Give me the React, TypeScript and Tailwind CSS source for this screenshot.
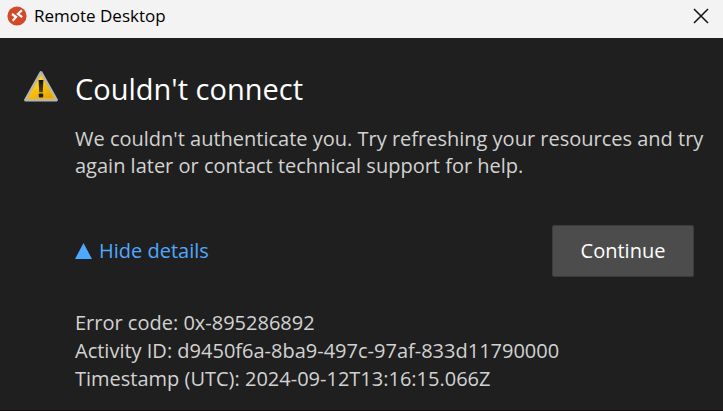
import { useState } from "react";

function RemoteDesktopLogo() {
  return (
    <svg viewBox="0 0 20 20" className="size-5 shrink-0" aria-hidden="true">
      <circle cx="10" cy="10" r="9.6" fill="#d4492a" />
      <path d="M5 8l4.1 3-3.4 3.8M14.9 4.2l-4 3.7 4.3 3.3" fill="none" stroke="#fff" strokeWidth="2.2" />
    </svg>
  );
}

function WarningIcon() {
  return (
    <svg viewBox="0 0 36 32" className="h-8 w-9 shrink-0" aria-hidden="true">
      <defs>
        <linearGradient id="warning-fill" x1="0" y1="0" x2="0.6" y2="1">
          <stop offset="0" stopColor="#ffe25a" />
          <stop offset="0.5" stopColor="#fbcb18" />
          <stop offset="1" stopColor="#e9a800" />
        </linearGradient>
        <linearGradient id="warning-mark" x1="0" y1="0" x2="0" y2="1">
          <stop offset="0" stopColor="#111" />
          <stop offset="1" stopColor="#4a4330" />
        </linearGradient>
      </defs>
      <path d="M18 2.6L33.4 30H2.6z" fill="#b5b5b8" stroke="#b5b5b8" strokeWidth="3" strokeLinejoin="round" />
      <path d="M18 5L31.6 28.8H4.4z" fill="url(#warning-fill)" stroke="#f0bd12" strokeWidth="0.8" strokeLinejoin="round" />
      <path d="M15.6 10h4.8l-.6 12.2h-3.6z" fill="url(#warning-mark)" />
      <rect x="15.8" y="23.4" width="4.4" height="4" rx="0.8" fill="#1e1a10" />
    </svg>
  );
}

export default function App() {
  const [open, setOpen] = useState(true);

  return (
    <div className="flex min-h-screen flex-col border-b border-[#140c10] bg-[#1f1f1f] font-['Open_Sans','Noto_Sans',sans-serif] text-[#d2d2d2]">
      <header className="flex h-[38px] items-center justify-between bg-[#f3f3f3] pr-3 pb-1.5 pl-[7px] text-black">
        <div className="flex items-center gap-[7px]">
          <RemoteDesktopLogo />
          <span className="text-[17px] leading-5">Remote Desktop</span>
        </div>
        <button type="button" aria-label="Close" className="flex size-5 items-center justify-center">
          <svg viewBox="0 0 16 16" className="size-4" aria-hidden="true">
            <path d="M1 1l14 14M15 1L1 15" stroke="#111" strokeWidth="1.5" fill="none" />
          </svg>
        </button>
      </header>

      <main className="flex gap-4 pt-8 pr-[9px] pb-4 pl-[23px]">
        <WarningIcon />
        <div className="min-w-0 flex-1 text-xl leading-7">
          <h1 className="text-[29px] leading-[38px] text-white">Couldn't connect</h1>
          <p className="mt-[17px] leading-[27px]">
            We couldn't authenticate you. Try refreshing your resources and try again later or contact technical support for help.
          </p>
          <div className="mt-[46px] flex items-center justify-between pr-5">
            <button
              type="button"
              aria-expanded={open}
              aria-controls="error-details"
              onClick={() => setOpen(!open)}
              className="flex items-center gap-[7px] text-[#4fa8ff]"
            >
              <svg viewBox="0 0 17 16" className={open ? "h-4 w-[17px]" : "h-4 w-[17px] rotate-180"} aria-hidden="true">
                <path d="M8.5 0L17 16H0z" fill="currentColor" />
              </svg>
              {open ? "Hide details" : "Show details"}
            </button>
            <button type="button" className="h-[52px] w-[142px] rounded-xs border border-[#3c3c3c] bg-[#4c4c4c] text-white">
              Continue
            </button>
          </div>
          {open && (
            <div id="error-details" className="mt-8">
              <p>Error code: 0x-895286892</p>
              <p>Activity ID: d9450f6a-8ba9-497c-97af-833d11790000</p>
              <p>Timestamp (UTC): 2024-09-12T13:16:15.066Z</p>
            </div>
          )}
        </div>
      </main>
    </div>
  );
}
